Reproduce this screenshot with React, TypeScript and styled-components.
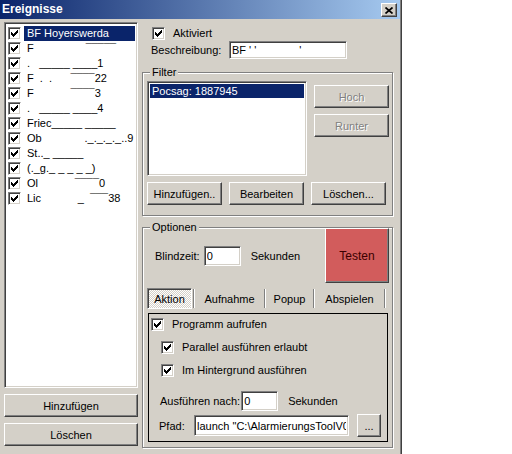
import React from "react";
import styled, { createGlobalStyle } from "styled-components";

const GlobalStyle = createGlobalStyle`
  body {
    margin: 0;
    background: #fff;
    font-family: "Liberation Sans", Arial, sans-serif;
    font-size: 11px;
    color: #000;
  }
  * { box-sizing: border-box; }
`;

const Window = styled.div`
  width: 402px;
  height: 454px;
  background: #d4d0c8;
  border-right: 1px solid #404040;
  box-shadow: inset -1px 0 0 #808080;
  display: flex;
  flex-direction: column;
  overflow: hidden;
`;

const TitleBar = styled.div`
  height: 19px;
  flex-shrink: 0;
  display: flex;
  justify-content: space-between;
  padding: 0 3px 0 2px;
  margin-right: 1px;
  background: linear-gradient(90deg, #0a246a, #a6caf0);
`;

const Title = styled.span`
  color: #fff;
  font-weight: bold;
  font-size: 12px;
  line-height: 19px;
`;

const CloseButton = styled.div`
  width: 16px;
  height: 14px;
  margin-top: 3px;
  display: flex;
  align-items: center;
  justify-content: center;
  background: #d4d0c8;
  border: 1px solid;
  border-color: #fff #404040 #404040 #fff;
  box-shadow: inset -1px -1px 0 #808080;
`;

const Body = styled.div`
  display: flex;
  gap: 4px;
  padding: 3px 0 0 4px;
`;

const LeftColumn = styled.div`
  width: 134px;
  display: flex;
  flex-direction: column;
`;

const Sunken = styled.div`
  background: #fff;
  border: 1px solid;
  border-color: #808080 #fff #fff #808080;
  box-shadow: inset 1px 1px 0 #404040, inset -1px -1px 0 #d4d0c8;
`;

const EventList = styled(Sunken)`
  height: 366px;
  padding: 3px 2px 0 1px;
`;

const EventRow = styled.div`
  display: flex;
  align-items: center;
  height: 15px;
  padding-left: 2px;
`;

const EventLabel = styled.div<{ $selected?: boolean }>`
  flex: 1;
  margin-left: 3px;
  height: 15px;
  line-height: 15px;
  padding-left: 3px;
  white-space: pre;
  overflow: hidden;
  background: ${(p) => (p.$selected ? "#0a246a" : "transparent")};
  color: ${(p) => (p.$selected ? "#fff" : "#000")};
`;

const Button = styled.div<{ $w?: number; $h?: number; $disabled?: boolean }>`
  width: ${(p) => (p.$w ? `${p.$w}px` : "100%")};
  height: ${(p) => p.$h ?? 23}px;
  flex-shrink: 0;
  display: flex;
  align-items: center;
  justify-content: center;
  background: #d4d0c8;
  border: 1px solid;
  border-color: #fff #404040 #404040 #fff;
  box-shadow: inset -1px -1px 0 #808080;
  color: ${(p) => (p.$disabled ? "#808080" : "#000")};
  text-shadow: ${(p) => (p.$disabled ? "1px 1px 0 #fff" : "none")};
`;

const WideButton = styled(Button)`
  margin-top: 6px;
`;

const BrowseButton = styled(Button)`
  margin-left: 8px;
`;

const TestButton = styled(Button)`
  width: 64px;
  height: 55px;
  background: #d25c5c;
  color: #3a0000;
  font-size: 12px;
`;

const RightColumn = styled.div`
  width: 251px;
  display: flex;
  flex-direction: column;
`;

const CheckRow = styled.label<{ $indent: number; $top: number }>`
  display: flex;
  align-items: center;
  height: 13px;
  margin-top: ${(p) => p.$top}px;
  margin-left: ${(p) => p.$indent}px;
  gap: 8px;
  line-height: 13px;
`;

const CheckBox = styled.span`
  width: 13px;
  height: 13px;
  flex-shrink: 0;
  background: #fff;
  border: 1px solid;
  border-color: #808080 #fff #fff #808080;
  box-shadow: inset 1px 1px 0 #404040, inset -1px -1px 0 #d4d0c8;
  padding: 1px;
  display: flex;
`;

const FieldRow = styled.div<{ $indent: number; $top: number; $h?: number }>`
  display: flex;
  align-items: center;
  height: ${(p) => p.$h ?? 20}px;
  margin-top: ${(p) => p.$top}px;
  margin-left: ${(p) => p.$indent}px;
`;

const FieldLabel = styled.span<{ $w?: number }>`
  width: ${(p) => (p.$w ? `${p.$w}px` : "auto")};
  flex-shrink: 0;
  white-space: nowrap;
`;

const TextBox = styled.input<{ $w: number; $h: number; $gap?: number }>`
  width: ${(p) => p.$w}px;
  height: ${(p) => p.$h}px;
  margin: 0 0 0 ${(p) => p.$gap ?? 0}px;
  padding: 0 2px;
  font: inherit;
  color: #000;
  background: #fff;
  border: 1px solid;
  border-color: #808080 #fff #fff #808080;
  box-shadow: inset 1px 1px 0 #404040, inset -1px -1px 0 #d4d0c8;
  outline: none;
  white-space: pre;
`;

const Unit = styled.span`
  margin-left: 10px;
`;

const GroupBox = styled.div<{ $top: number }>`
  position: relative;
  margin-top: ${(p) => p.$top}px;
  border: 1px solid #808080;
  box-shadow: inset 1px 1px 0 #fff, 1px 1px 0 #fff;
`;

const GroupLabel = styled.span`
  position: absolute;
  top: -7px;
  left: 7px;
  padding: 0 2px;
  line-height: 13px;
  background: #d4d0c8;
`;

const FilterBox = styled(GroupBox)`
  height: 144px;
  padding: 8px 0 0 4px;
`;

const FilterTop = styled.div`
  display: flex;
  gap: 7px;
`;

const FilterList = styled(Sunken)`
  width: 160px;
  height: 95px;
  padding: 2px;
`;

const FilterItem = styled.div`
  height: 14px;
  line-height: 14px;
  padding-left: 2px;
  background: #0a246a;
  color: #fff;
`;

const SideButtons = styled.div`
  display: flex;
  flex-direction: column;
  gap: 6px;
  padding-top: 4px;
`;

const ButtonRow = styled.div`
  display: flex;
  gap: 7px;
  margin-top: 6px;
`;

const OptionsBox = styled(GroupBox)`
  padding: 0 0 5px 0;
`;

const OptionsTop = styled.div`
  display: flex;
  align-items: center;
  justify-content: space-between;
  height: 55px;
  padding: 0 3px 0 12px;
`;

const Inline = styled.div`
  display: flex;
  align-items: center;
`;

const TabBar = styled.div`
  display: flex;
  height: 21px;
  margin-top: 5px;
  padding-left: 4px;
`;

const Tab = styled.div<{ $w: number; $active?: boolean }>`
  width: ${(p) => p.$w}px;
  height: 21px;
  display: flex;
  align-items: center;
  justify-content: center;
  border: 1px solid;
  border-color: ${(p) => (p.$active ? "#808080 #fff #fff #808080" : "transparent")};
  box-shadow: ${(p) => (p.$active ? "inset 1px 1px 0 #404040" : "none")};
  background: ${(p) =>
    p.$active ? "repeating-conic-gradient(#fff 0 25%, #d4d0c8 0 50%) 0 0 / 2px 2px" : "transparent"};
`;

const TabSeparator = styled.div`
  width: 2px;
  height: 19px;
  margin: 1px 1px 0;
  border-left: 1px solid #808080;
  border-right: 1px solid #fff;
`;

const ActionPanel = styled.div`
  width: 240px;
  height: 129px;
  margin: 4px 0 0 5px;
  border: 1px solid #000;
  padding-top: 4px;
`;

const checkPath = [3, 4, 5, 4, 3, 2, 1].map((t, i) => `M${1 + i} ${t}h1v3h-1z`).join("");

function Check() {
  return (
    <CheckBox>
      <svg width="9" height="9" viewBox="0 0 9 9" shapeRendering="crispEdges">
        <path d={checkPath} fill="#000" />
      </svg>
    </CheckBox>
  );
}

const events = [
  "BF Hoyerswerda",
  "F                 \u00af\u00af\u00af\u00af\u00af",
  ".   _____ ____1",
  "F  .  .      \u00af\u00af\u00af\u00af22",
  "F            \u00af\u00af\u00af\u00af3",
  ".   _____ ____4",
  "Friec_____ _____",
  "Ob              ._._._._..9",
  "St.._ _____",
  "(._g._ _ _ _ _)",
  "Ol            \u00af\u00af\u00af\u00af0",
  "Lic            _  \u00af\u00af\u00af38",
];

export default function App() {
  return (
    <>
      <GlobalStyle />
      <Window>
        <TitleBar>
          <Title>Ereignisse</Title>
          <CloseButton>
            <svg width="8" height="7" viewBox="0 0 8 7">
              <path d="M0.5 0.5 L7.5 6.5 M7.5 0.5 L0.5 6.5" stroke="#000" strokeWidth="1.7" />
            </svg>
          </CloseButton>
        </TitleBar>
        <Body>
          <LeftColumn>
            <EventList>
              {events.map((name, i) => (
                <EventRow key={i}>
                  <Check />
                  <EventLabel $selected={i === 0}>{name}</EventLabel>
                </EventRow>
              ))}
            </EventList>
            <WideButton>Hinzufügen</WideButton>
            <WideButton>Löschen</WideButton>
          </LeftColumn>

          <RightColumn>
            <CheckRow $indent={10} $top={5}>
              <Check />
              Aktiviert
            </CheckRow>
            <FieldRow $indent={9} $top={1} $h={18}>
              <FieldLabel $w={78}>Beschreibung:</FieldLabel>
              <TextBox $w={118} $h={18} readOnly value={"BF ' '              '"} />
            </FieldRow>

            <FilterBox $top={13}>
              <GroupLabel>Filter</GroupLabel>
              <FilterTop>
                <FilterList>
                  <FilterItem>Pocsag: 1887945</FilterItem>
                </FilterList>
                <SideButtons>
                  <Button $w={75} $disabled>
                    Hoch
                  </Button>
                  <Button $w={75} $disabled>
                    Runter
                  </Button>
                </SideButtons>
              </FilterTop>
              <ButtonRow>
                <Button $w={75}>Hinzufügen..</Button>
                <Button $w={75}>Bearbeiten</Button>
                <Button $w={75}>Löschen...</Button>
              </ButtonRow>
            </FilterBox>

            <OptionsBox $top={11}>
              <GroupLabel>Optionen</GroupLabel>
              <OptionsTop>
                <Inline>
                  <FieldLabel>Blindzeit:</FieldLabel>
                  <TextBox $w={37} $h={20} $gap={4} readOnly value="0" />
                  <Unit>Sekunden</Unit>
                </Inline>
                <TestButton>Testen</TestButton>
              </OptionsTop>
              <TabBar>
                <Tab $w={45} $active>
                  Aktion
                </Tab>
                <TabSeparator />
                <Tab $w={67}>Aufnahme</Tab>
                <TabSeparator />
                <Tab $w={45}>Popup</Tab>
                <TabSeparator />
                <Tab $w={67}>Abspielen</Tab>
                <TabSeparator />
              </TabBar>
              <ActionPanel>
                <CheckRow $indent={2} $top={0}>
                  <Check />
                  Programm aufrufen
                </CheckRow>
                <CheckRow $indent={12} $top={10}>
                  <Check />
                  Parallel ausführen erlaubt
                </CheckRow>
                <CheckRow $indent={12} $top={10}>
                  <Check />
                  Im Hintergrund ausführen
                </CheckRow>
                <FieldRow $indent={11} $top={14}>
                  <FieldLabel>Ausführen nach:</FieldLabel>
                  <TextBox $w={37} $h={20} $gap={1} readOnly value="0" />
                  <Unit>Sekunden</Unit>
                </FieldRow>
                <FieldRow $indent={10} $top={3} $h={23}>
                  <FieldLabel $w={35}>Pfad:</FieldLabel>
                  <TextBox
                    $w={155}
                    $h={21}
                    readOnly
                    value={'launch "C:\\AlarmierungsToolV0\\AlarmierungsTool.exe"'}
                  />
                  <BrowseButton $w={24}>...</BrowseButton>
                </FieldRow>
              </ActionPanel>
            </OptionsBox>
          </RightColumn>
        </Body>
      </Window>
    </>
  );
}
